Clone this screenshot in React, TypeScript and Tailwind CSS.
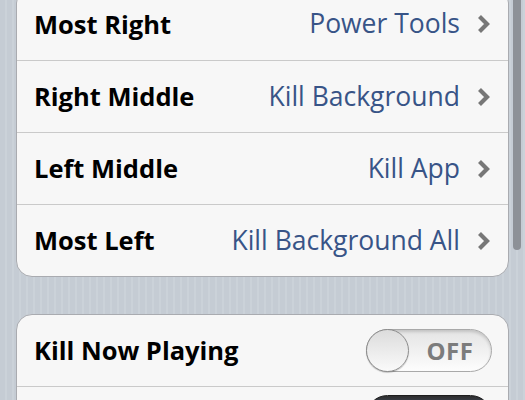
import React from 'react';

interface NavRow {
  label: string;
  value: string;
}

const navRows: NavRow[] = [
  { label: 'Most Right', value: 'Power Tools' },
  { label: 'Right Middle', value: 'Kill Background' },
  { label: 'Left Middle', value: 'Kill App' },
  { label: 'Most Left', value: 'Kill Background All' },
];

const Chevron: React.FC = () => (
  <svg width="16" height="22" viewBox="0 0 16 22" className="ml-[16px] shrink-0">
    <path d="M3.5 3.5 L11 11 L3.5 18.5" fill="none" stroke="#777777" strokeWidth="4.2" strokeLinecap="butt" strokeLinejoin="miter" />
  </svg>
);

const Toggle: React.FC<{ on?: boolean }> = ({ on }) =>
  on ? (
    <div className="h-[43px] w-[126px] rounded-full border border-[#1e1e1e] bg-gradient-to-b from-[#2e2e2e] via-[#5a6f98] to-[#7f97c6]" />
  ) : (
    <div className="flex h-[43px] w-[126px] items-center rounded-full border border-[#a9a9a9] bg-gradient-to-b from-[#e4e4e4] to-[#fdfdfd] shadow-[inset_0_2px_3px_rgba(0,0,0,0.15)]">
      <div className="h-[43px] w-[43px] -ml-px rounded-full border border-[#8c8c8c] bg-gradient-to-b from-[#dcdcdc] to-[#fafafa] shadow-[0_1px_1px_rgba(0,0,0,0.2)]" />
      <span className="flex-1 text-center text-[24px] font-bold text-[#7c7c7c] tracking-wide">OFF</span>
    </div>
  );

const App: React.FC = () => {
  return (
    <div
      className="relative h-[400px] w-[525px] overflow-hidden bg-[repeating-linear-gradient(90deg,#c5ccd4_0px,#c5ccd4_5px,#cbd2d9_5px,#cbd2d9_7px)]"
      style={{ fontFamily: '"Open Sans", "DejaVu Sans", sans-serif' }}
    >
      {/* Scroll indicator */}
      <div className="absolute right-[4px] top-0 h-[250px] w-[8px] rounded-b-full bg-[#8d9197]" />

      <div className="-mt-[13px] px-4">
        {/* Swipe actions group */}
        <div className="overflow-hidden rounded-[16px] border border-[#a9abb0] bg-[#f7f7f7]">
          {navRows.map((row, i) => (
            <div
              key={row.label}
              className={`flex h-[72px] items-center pl-[17px] pr-[16px] ${i > 0 ? 'border-t border-[#cacaca]' : ''}`}
            >
              <span className="text-[25.5px] font-bold text-black">{row.label}</span>
              <span className="ml-auto text-[26.5px] text-[#385487]">{row.value}</span>
              <Chevron />
            </div>
          ))}
        </div>

        {/* Toggles group */}
        <div className="mt-[37px] overflow-hidden rounded-[16px] border border-[#a9abb0] bg-[#f7f7f7]">
          <div className="flex h-[71px] items-center pl-[17px] pr-[16px]">
            <span className="text-[25.5px] font-bold text-black">Kill Now Playing</span>
            <div className="ml-auto">
              <Toggle />
            </div>
          </div>
          <div className="flex h-[71px] items-start justify-end border-t border-[#cacaca] pl-[17px] pr-[16px] pt-[8px]">
            <Toggle on />
          </div>
        </div>
      </div>
    </div>
  );
};

export default App;
